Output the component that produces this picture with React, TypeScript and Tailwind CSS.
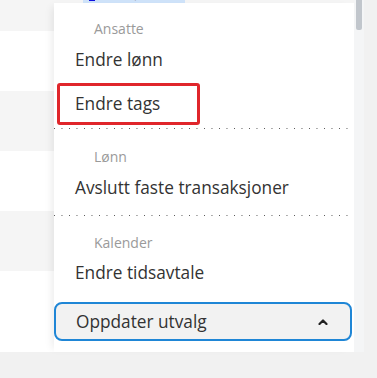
import React from 'react';

const rows = [
  'h-[31px] bg-[#f5f5f5]',
  'h-[60px] bg-white',
  'h-[60px] bg-[#f5f5f5]',
  'h-[60px] bg-white',
  'h-[60px] bg-[#f5f5f5]',
  'h-[81px] bg-white',
];

const Separator = () => (
  <div className="h-px w-full bg-[linear-gradient(to_right,#555_1px,transparent_1px)] bg-[length:7.5px_1px]" />
);

const GroupLabel = ({ children, pt }: { children: React.ReactNode; pt: string }) => (
  <div className={`${pt} pl-[40px] text-[14px] leading-[20px] text-[#9a9a9a]`}>{children}</div>
);

export default function App() {
  return (
    <div className="relative h-[378px] w-[377px] overflow-hidden bg-[#f1f1f1] font-['Open_Sans',sans-serif]">
      {/* table behind the menu */}
      <div className="w-[364px]">
        {rows.map((cls, i) => (
          <div key={i} className={`${cls} relative overflow-hidden`}>
            {i === 0 && (
              <div className="absolute bottom-[28px] left-[83px] flex h-[18px] items-center gap-[4px] bg-[#cfe3fa] pl-[6px] pr-[8px] text-[16px] text-[#222]">
                <span className="h-[14px] w-[6px] bg-[#1010e0]" />
                <span>Fastlønnet</span>
              </div>
            )}
          </div>
        ))}
      </div>

      {/* scrollbar */}
      <div className="absolute left-[354px] top-0 h-[352px] w-[10px] bg-[#f4f5f6]">
        <div className="ml-[2px] h-[30px] w-[6px] rounded-b-[2px] bg-[#c1c6cc]" />
      </div>

      {/* dropdown menu */}
      <div className="absolute left-[54px] top-[3px] flex h-[349px] w-[300px] flex-col bg-white text-[17.25px] text-[#333] shadow-[-6px_0_8px_-4px_rgba(0,0,0,0.08)]">
        <GroupLabel pt="pt-[16px]">Ansatte</GroupLabel>
        <div className="flex h-[42px] shrink-0 items-center pl-[21px]">Endre lønn</div>
        <div className="ml-[3px] mt-[2px] flex h-[42px] w-[143px] shrink-0 items-center rounded-[3px] border-[3px] border-[#e0262b] pl-[15px]">
          Endre tags
        </div>
        <div className="h-[3px] shrink-0" />
        <Separator />
        <GroupLabel pt="pt-[18px]">Lønn</GroupLabel>
        <div className="flex h-[42px] shrink-0 items-center pl-[21px]">Avslutt faste transaksjoner</div>
        <div className="h-[6px] shrink-0" />
        <Separator />
        <GroupLabel pt="pt-[17px]">Kalender</GroupLabel>
        <div className="flex h-[40px] shrink-0 items-center pl-[21px]">Endre tidsavtale</div>
        <button className="mt-[9px] flex h-[39px] w-[298px] shrink-0 items-center justify-between rounded-[8px] border-2 border-[#1f86d6] bg-[#f2f2f2] pl-[20px] pr-[22px] text-[17.25px] text-[#333]">
          <span>Oppdater utvalg</span>
          <svg width="10" height="6" viewBox="0 0 10 6" fill="none">
            <path d="M1.5 5 L5 1.5 L8.5 5" stroke="#222" strokeWidth="2.2" strokeLinecap="round" strokeLinejoin="round" />
          </svg>
        </button>
      </div>
    </div>
  );
}
